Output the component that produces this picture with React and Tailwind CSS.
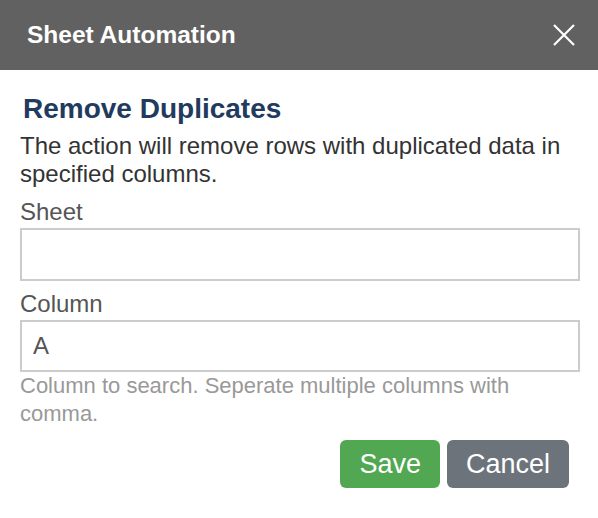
import React, { useState } from 'react';

const App = () => {
    const [sheet, setSheet] = useState('');
    const [column, setColumn] = useState('A');

    return (
        <div className="w-[598px] h-[518px] bg-white" style={{ fontFamily: '"Liberation Sans", Arial, sans-serif' }}>
            <div className="h-[70px] bg-[#616161] flex items-center justify-between pl-[27px] pr-[23px]">
                <h1 className="text-white text-[24.5px] font-bold leading-none">Sheet Automation</h1>
                <button className="text-white">
                    <svg width="22" height="22" viewBox="0 0 22 22" fill="none" stroke="currentColor" strokeWidth="2.2">
                        <path d="M1 1 L21 21 M21 1 L1 21" />
                    </svg>
                </button>
            </div>

            <div className="pl-5 pr-[18px]">
                <h2 className="mt-[23px] pl-[3px] text-[28px] leading-[32px] font-bold text-[#223a5e]">Remove Duplicates</h2>
                <p className="mt-[7px] text-[24px] leading-[28px] text-[#333]">
                    The action will remove rows with duplicated data in specified columns.
                </p>

                <label className="block mt-[10px] text-[24px] leading-[28px] text-[#555]">Sheet</label>
                <input
                    type="text"
                    value={sheet}
                    onChange={(e) => setSheet(e.target.value)}
                    className="block w-full h-[53px] mt-[2px] border-2 border-[#ccc] px-[11px] text-[24px] text-[#555] outline-none"
                />

                <label className="block mt-[9px] text-[24px] leading-[28px] text-[#555]">Column</label>
                <input
                    type="text"
                    value={column}
                    onChange={(e) => setColumn(e.target.value)}
                    className="block w-full h-[52px] mt-[2px] border-2 border-[#ccc] px-[11px] text-[24px] text-[#555] outline-none"
                />
                <p className="text-[22px] leading-[28px] text-[#999]">
                    Column to search. Seperate multiple columns with comma.
                </p>

                <div className="flex justify-end gap-[7px] mt-[12px] pr-[11px]">
                    <button className="h-[48px] px-[19px] rounded-[6px] bg-[#52a852] text-white text-[27px] leading-none">Save</button>
                    <button className="h-[48px] px-[19px] rounded-[6px] bg-[#6c737b] text-white text-[27px] leading-none">Cancel</button>
                </div>
            </div>
        </div>
    );
};

export default App;
